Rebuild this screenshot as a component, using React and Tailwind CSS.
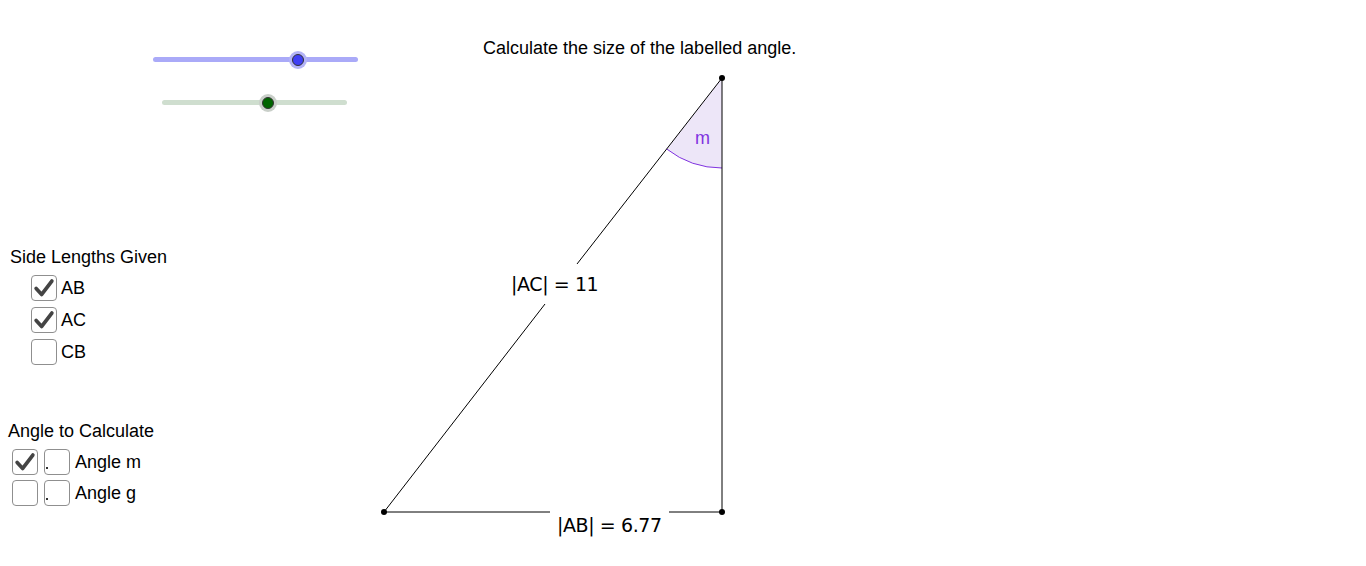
import React from 'react';

const font = { fontFamily: '"Liberation Sans", Arial, sans-serif' };
const mathFont = { fontFamily: '"DejaVu Sans", sans-serif', letterSpacing: '-0.4px' };

const Check = () => (
  <svg viewBox="0 0 26 26" className="w-full h-full">
    <path d="M4.5 13.5 L10.5 20 L21.5 5.5" fill="none" stroke="#444" strokeWidth="4" strokeLinecap="round" strokeLinejoin="round" />
  </svg>
);

const Box = ({ checked, dot }) => (
  <div className="relative w-[26px] h-[26px] rounded-[4px] border border-[#8f8f8f] bg-white">
    {checked && <Check />}
    {dot && <div className="absolute left-[1px] bottom-[5px] w-[2px] h-[2px] bg-[#333]" />}
  </div>
);

const Slider = ({ left, top, width, track, thumb, halo, pos }) => (
  <div className="absolute" style={{ left, top, width }}>
    <div className="h-[5px] rounded-full" style={{ background: track }} />
    <div
      className="absolute w-[18px] h-[18px] rounded-full flex items-center justify-center"
      style={{ left: pos - 9, top: -6.5, background: halo }}
    >
      <div className="w-[12px] h-[12px] rounded-full border border-[#333]" style={{ background: thumb }} />
    </div>
  </div>
);

export default function App() {
  // triangle vertices
  const A = [384, 512];
  const B = [722, 512];
  const C = [722, 78];
  const r = 90;
  const dx = A[0] - C[0];
  const dy = A[1] - C[1];
  const len = Math.hypot(dx, dy);
  const P = [C[0] + (dx / len) * r, C[1] + (dy / len) * r];

  return (
    <div className="relative w-[1366px] h-[566px] bg-white overflow-hidden text-black" style={font}>
      <svg className="absolute inset-0" width="1366" height="566">
        <path
          d={`M${C[0]} ${C[1]} L${P[0]} ${P[1]} A${r} ${r} 0 0 0 ${C[0]} ${C[1] + r} Z`}
          fill="#ede6f8"
          stroke="none"
        />
        <path
          d={`M${P[0]} ${P[1]} A${r} ${r} 0 0 0 ${C[0]} ${C[1] + r}`}
          fill="none"
          stroke="#8033e0"
          strokeWidth="1"
        />
        {/* AC with gap for label */}
        <line x1={C[0]} y1={C[1]} x2="577" y2="264" stroke="#000" strokeWidth="1" />
        <line x1="545" y1="304" x2={A[0]} y2={A[1]} stroke="#000" strokeWidth="1" />
        {/* AB with gap */}
        <line x1={A[0]} y1={A[1]} x2="550" y2={A[1]} stroke="#000" strokeWidth="1" />
        <line x1="669" y1={B[1]} x2={B[0]} y2={B[1]} stroke="#000" strokeWidth="1" />
        {/* BC */}
        <line x1={B[0]} y1={B[1]} x2={C[0]} y2={C[1]} stroke="#000" strokeWidth="1" />
        <circle cx={A[0]} cy={A[1]} r="3" fill="#000" />
        <circle cx={B[0]} cy={B[1]} r="3" fill="#000" />
        <circle cx={C[0]} cy={C[1]} r="3" fill="#000" />
      </svg>

      <div className="absolute left-[695px] top-[125px] text-[18px] text-[#8033e0]">m</div>

      <div className="absolute left-[511px] top-[275px] text-[19px] leading-none whitespace-nowrap" style={mathFont}>
        |AC| = 11
      </div>
      <div className="absolute left-[557px] top-[516px] text-[19px] leading-none whitespace-nowrap" style={mathFont}>
        |AB| = 6.77
      </div>

      <div className="absolute left-[483px] top-[35px] text-[18px] whitespace-nowrap">
        Calculate the size of the labelled angle.
      </div>

      <Slider left={153} top={57} width={205} track="#aaaaf8" thumb="#3f3ff5" halo="#b3b3f7" pos={145} />
      <Slider left={162} top={100} width={185} track="#cfdecf" thumb="#006400" halo="#c9cfc9" pos={106} />

      <div className="absolute left-[10px] top-[246px] flex flex-col">
        <div className="text-[18px] leading-[22px]">Side Lengths Given</div>
        <div className="flex flex-col gap-[6px] mt-[7px] ml-[21px]">
          {[
            ['AB', true],
            ['AC', true],
            ['CB', false],
          ].map(([label, on]) => (
            <div key={label} className="flex items-center gap-[4px]">
              <Box checked={on} />
              <span className="text-[18px] leading-none">{label}</span>
            </div>
          ))}
        </div>
      </div>

      <div className="absolute left-[8px] top-[420px] flex flex-col">
        <div className="text-[18px] leading-[22px]">Angle to Calculate</div>
        <div className="flex flex-col gap-[5px] mt-[7px] ml-[4px]">
          {[
            ['Angle m', true],
            ['Angle g', false],
          ].map(([label, on]) => (
            <div key={label} className="flex items-center">
              <Box checked={on} />
              <div className="ml-[6px]">
                <Box dot />
              </div>
              <span className="ml-[5px] text-[18px] leading-none">{label}</span>
            </div>
          ))}
        </div>
      </div>
    </div>
  );
}
